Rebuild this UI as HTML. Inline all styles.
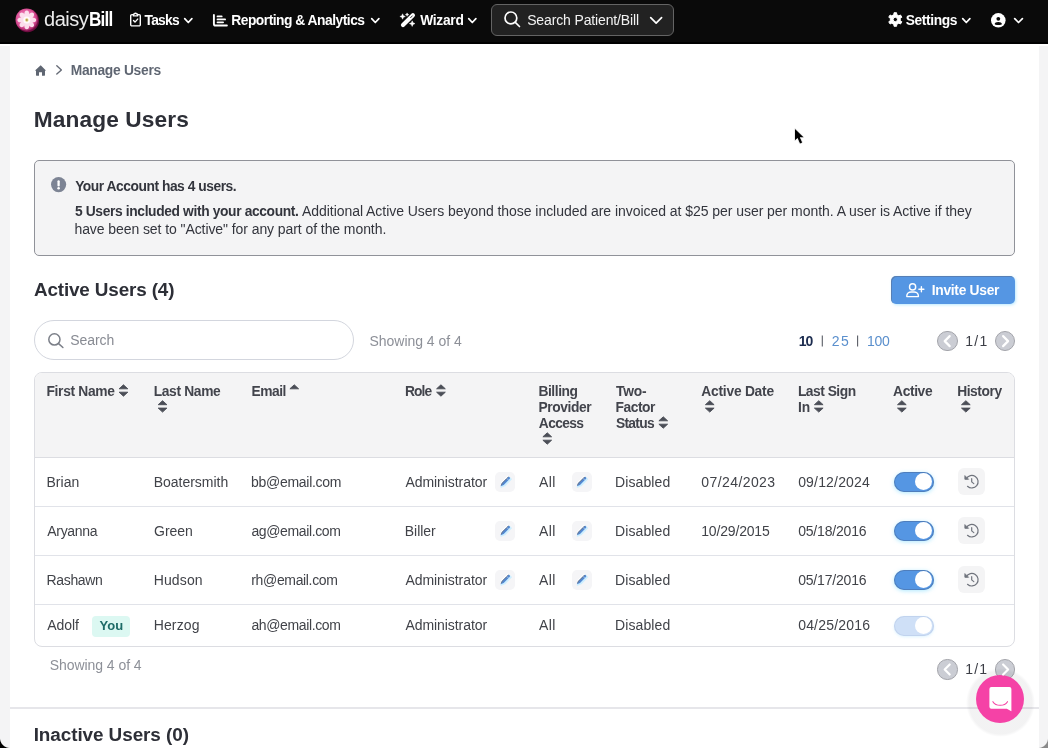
<!DOCTYPE html>
<html lang="en">
<head>
<meta charset="utf-8">
<title>Manage Users</title>
<style>
*{box-sizing:border-box}
html,body{margin:0;padding:0}
body{width:1048px;height:748px;overflow:hidden;background:#f4f4f5;font-family:"Liberation Sans",Arial,sans-serif;color:#3f4149;position:relative;font-size:14px}
.x{position:absolute;white-space:nowrap;line-height:20px;height:20px}
.b{position:absolute}
svg{position:absolute;overflow:visible}
#nav{left:0;top:0;width:1048px;height:44px;background:#0a0a0a;border-bottom:2px solid #000}
#nsearch{left:491px;top:4px;width:183px;height:32px;border:1px solid #646464;border-radius:6px;background:#222}
#gap{left:0;top:44px;width:1048px;height:2px;background:#fff}
#main{left:10px;top:46px;width:1029px;height:702px;background:#fff}
#alert{left:34px;top:160px;width:981px;height:96px;border:1px solid #909299;border-radius:5px;background:#f4f4f5}
#invite{left:890.7px;top:276.2px;width:124.3px;height:27.6px;border-radius:5px;background:#5596e3;box-shadow:inset 1px 1px 0 rgba(90,100,125,.45),1px 1px 3px rgba(160,225,255,.7)}
#search{left:34px;top:320px;width:320px;height:40px;border:1px solid #d3d6de;border-radius:20px;background:#fff}
#tbl{left:34px;top:372px;width:981px;height:275px;border:1px solid #dcdde2;border-radius:8px;background:#fff;overflow:hidden}
#thead{left:0;top:0;width:100%;height:85px;background:#f4f4f5;border-bottom:1px solid #dcdde2}
.rl{left:0;width:100%;height:1px;background:#e1e3e9}
.eb{width:20px;height:20px;border-radius:5px;background:#f5f5f7}
.hb{width:27px;height:27px;border-radius:6px;background:#f4f4f5;left:958px}
.tg{left:893.5px;width:40px;height:20.5px;border-radius:11px;background:#5596e3;box-shadow:inset 0 0 0 1px rgba(70,90,130,.4),0 1px 4px rgba(150,225,255,.75)}
.tg i{position:absolute;right:1.6px;top:1.6px;width:17.3px;height:17.3px;border-radius:50%;background:#fff}
.tg.off{background:#cfe0f7;box-shadow:inset 0 0 0 1px rgba(150,170,210,.25),0 1px 3px rgba(200,235,255,.6)}
.pg{width:20.4px;height:20.4px;border-radius:50%;background:#cbcdd4;border:1px solid #a3a4aa}
#you{left:92px;top:615.8px;width:38px;height:21px;border-radius:4px;background:#dcf8f2}
#hr{left:10px;top:707px;width:1029px;height:1.5px;background:#e6e6ea}
#halo{left:965.5px;top:667.5px;width:69px;height:69px;border-radius:50%;background:radial-gradient(circle closest-side,rgba(10,10,20,.05) 0,rgba(10,10,20,.05) 91%,rgba(10,10,20,0) 100%)}
#chat{left:976.3px;top:675.3px;width:48px;height:48px;border-radius:50%;background:#f542a6}
#cbl{left:0;top:738px;width:10px;height:10px;background:radial-gradient(circle at 100% 0,rgba(0,0,0,0) 9.5px,#000 10.5px)}
#cbr{left:1038px;top:738px;width:10px;height:10px;background:radial-gradient(circle at 0 0,rgba(0,0,0,0) 9.5px,#8a8a8a 10.5px)}
</style>
</head>
<body><div id="wrap" style="position:absolute;left:0;top:0;width:1048px;height:748px;will-change:transform">
<div class="b" id="nav"></div>
<div class="b" id="nsearch"></div>
<div class="b" id="gap"></div>
<div class="b" id="main"></div>
<div class="b" id="alert"></div>
<div class="b" id="invite"></div>
<div class="b" id="search"></div>
<div class="b" id="tbl"><div class="b" id="thead"></div>
<div class="b rl" style="top:133px"></div><div class="b rl" style="top:182px"></div><div class="b rl" style="top:231px"></div></div>
<div class="b eb" style="left:495px;top:472px"></div><div class="b eb" style="left:571.5px;top:472px"></div>
<div class="b eb" style="left:495px;top:521px"></div><div class="b eb" style="left:571.5px;top:521px"></div>
<div class="b eb" style="left:495px;top:570px"></div><div class="b eb" style="left:571.5px;top:570px"></div>
<div class="b hb" style="top:468px"></div><div class="b hb" style="top:517px"></div><div class="b hb" style="top:566px"></div>
<div class="b tg" style="top:471.5px"><i></i></div><div class="b tg" style="top:520.5px"><i></i></div><div class="b tg" style="top:569.5px"><i></i></div><div class="b tg off" style="top:615.5px"><i></i></div>
<div class="b pg" style="left:937.3px;top:331px"></div><div class="b pg" style="left:994.6px;top:331px"></div>
<div class="b pg" style="left:937.3px;top:659.4px"></div><div class="b pg" style="left:994.6px;top:659.4px"></div>
<div class="b" id="you"></div>
<div class="b" id="hr"></div>
<div class="b" id="halo"></div>
<div class="b" id="chat"></div>
<div class="b" id="cbl"></div><div class="b" id="cbr"></div>
<svg style="left:15.3px;top:8.4px" width="24" height="24.6" viewBox="-12 -12 24 24.6">
<defs><radialGradient id="lg" cx="46%" cy="44%" r="56%"><stop offset="0" stop-color="#f59ac8"/><stop offset=".7" stop-color="#e0589c"/><stop offset=".9" stop-color="#b93478"/><stop offset="1" stop-color="#8d1c58"/></radialGradient></defs>
<circle cx=".5" cy=".7" r="11.5" fill="#6d0c3f"/><circle cx="-.3" cy="-.3" r="11.2" fill="url(#lg)"/>
<g fill="#fde3f0" opacity=".97" transform="translate(-.2 -.1)"><ellipse rx="2.5" ry="4.4" cy="-5"/><ellipse rx="2.5" ry="4.4" cy="-5" transform="rotate(45)"/><ellipse rx="2.5" ry="4.4" cy="-5" transform="rotate(90)"/><ellipse rx="2.5" ry="4.4" cy="-5" transform="rotate(135)"/><ellipse rx="2.5" ry="4.4" cy="-5" transform="rotate(180)"/><ellipse rx="2.5" ry="4.4" cy="-5" transform="rotate(225)"/><ellipse rx="2.5" ry="4.4" cy="-5" transform="rotate(270)"/><ellipse rx="2.5" ry="4.4" cy="-5" transform="rotate(315)"/><circle r="3.5" fill="#fff"/></g>
<circle cx="-.2" cy="0" r="1.7" fill="#e6cf7a"/><circle cx="-.2" cy="0" r=".75" fill="#8a7a48"/>
</svg>
<svg style="left:129.8px;top:12.4px" width="11" height="14.6" viewBox="0 0 11 14.6" ><g fill="none" stroke="#fff" stroke-width="1.4" stroke-linejoin="round" stroke-linecap="round"><path d="M3.2 2.6H1.9a1.2 1.2 0 0 0-1.2 1.2v8.9a1.2 1.2 0 0 0 1.2 1.2h7.2a1.2 1.2 0 0 0 1.2-1.2V3.8a1.2 1.2 0 0 0-1.2-1.2H7.8"/><path d="M3.4 3.9V2.7c0-.4.3-.7.7-.7h.3a1.2 1.2 0 0 1 2.2 0h.3c.4 0 .7.3.7.7v1.2z" /><path d="M3.5 8.6l1.5 1.5 2.7-3"/></g></svg>
<svg style="left:213.4px;top:13.6px" width="14.8" height="12.4" viewBox="0 0 14.8 12.4" ><g fill="none" stroke="#fff" stroke-linecap="round" stroke-linejoin="round"><path d="M.9 .9v9a1.6 1.6 0 0 0 1.6 1.6h11.4" stroke-width="1.9"/><path d="M4.5 2.4h4.2M4.5 5.4h7.6M4.500 8.300h5.600" stroke-width="1.8"/></g></svg>
<svg style="left:400.3px;top:12.8px" width="15.2" height="14" viewBox="0 0 15.2 14" ><path d="M3.000 12.100L12.900 2.300" stroke="#fff" stroke-width="4.2" stroke-linecap="round"/><path d="M10.600 4.700l1.700-1.800" stroke="#0a0a0a" stroke-width=".8" stroke-linecap="round"/><path d="M2.60 0.80L3.41 2.69L5.30 3.50L3.41 4.31L2.60 6.20L1.79 4.31L-0.10 3.50L1.79 2.69Z" fill="#fff" stroke="#fff" stroke-width=".5" stroke-linejoin="round"/><path d="M7.10 -0.10L7.61 1.09L8.80 1.60L7.61 2.11L7.10 3.30L6.59 2.11L5.40 1.60L6.59 1.09Z" fill="#fff" stroke="#fff" stroke-width=".5" stroke-linejoin="round"/><path d="M12.20 7.80L13.04 9.76L15.00 10.60L13.04 11.44L12.20 13.40L11.36 11.44L9.40 10.60L11.36 9.76Z" fill="#fff" stroke="#fff" stroke-width=".5" stroke-linejoin="round"/></svg>
<svg style="left:184.4px;top:17.8px" width="8.6" height="5.3" viewBox="0 0 8.6 5.3" ><path d="M.7 .7L4.30 4.50L7.90 .7" fill="none" stroke="#fff" stroke-width="1.7" stroke-linecap="round" stroke-linejoin="round"/></svg>
<svg style="left:370.8px;top:17.8px" width="8.6" height="5.3" viewBox="0 0 8.6 5.3" ><path d="M.7 .7L4.30 4.50L7.90 .7" fill="none" stroke="#fff" stroke-width="1.7" stroke-linecap="round" stroke-linejoin="round"/></svg>
<svg style="left:468.2px;top:17.8px" width="8.6" height="5.3" viewBox="0 0 8.6 5.3" ><path d="M.7 .7L4.30 4.50L7.90 .7" fill="none" stroke="#fff" stroke-width="1.7" stroke-linecap="round" stroke-linejoin="round"/></svg>
<svg style="left:962.1px;top:17.8px" width="8.6" height="5.3" viewBox="0 0 8.6 5.3" ><path d="M.7 .7L4.30 4.50L7.90 .7" fill="none" stroke="#fff" stroke-width="1.7" stroke-linecap="round" stroke-linejoin="round"/></svg>
<svg style="left:1014.2px;top:17.8px" width="9.1" height="5.3" viewBox="0 0 9.1 5.3" ><path d="M.7 .7L4.55 4.50L8.40 .7" fill="none" stroke="#fff" stroke-width="1.7" stroke-linecap="round" stroke-linejoin="round"/></svg>
<svg style="left:649.7px;top:17px" width="12.3" height="6.9" viewBox="0 0 12.3 6.9" ><path d="M.7 .7L6.15 6.10L11.60 .7" fill="none" stroke="#fff" stroke-width="1.7" stroke-linecap="round" stroke-linejoin="round"/></svg>
<svg style="left:503.8px;top:10.9px" width="16.4" height="16.4" viewBox="0 0 16.4 16.4" ><g fill="none" stroke="#fff" stroke-width="1.7" stroke-linecap="round"><circle cx="6.9" cy="6.9" r="5.9"/><path d="M11.300 11.300l4.200 4.200"/></g></svg>
<svg style="left:887.6px;top:12.2px" width="14.6" height="15" viewBox="0 0 14.6 15" ><path d="M5.88 2.60L6.01 0.72L8.59 0.72L8.72 2.60L10.83 3.82L12.52 2.99L13.82 5.23L12.25 6.28L12.25 8.72L13.82 9.77L12.52 12.01L10.83 11.18L8.72 12.40L8.59 14.28L6.01 14.28L5.88 12.40L3.77 11.18L2.08 12.01L0.78 9.77L2.35 8.72L2.35 6.28L0.78 5.23L2.08 2.99L3.77 3.82ZM5.10 7.50a2.2 2.2 0 1 0 4.4 0a2.2 2.2 0 1 0 -4.4 0Z" fill="#fff" fill-rule="evenodd" stroke="#fff" stroke-width="1" stroke-linejoin="round"/></svg>
<svg style="left:991.4px;top:12.5px" width="14.6" height="14.6" viewBox="0 0 14.6 14.6" ><circle cx="7.3" cy="7.3" r="7.3" fill="#fff"/><circle cx="7.3" cy="5.800" r="1.900" fill="#0a0a0a"/><path d="M3.700 11.000c0-1.300 1.600-2.000 3.600-2.000s3.600.7 3.600 2.000c0 .7-1.600 1.100-3.600 1.100s-3.600-.4-3.600-1.100z" fill="#0a0a0a"/></svg>
<svg style="left:34.9px;top:64.7px" width="11.4" height="11" viewBox="0 0 11.4 11" ><path d="M5.700 .2L.3 5.200c-.2.200-.1.600.2.600h.5v4.500c0 .3.200.5.500.5h2.500V7.200h3v3.600h2.500c.3 0 .5-.2.500-.5V5.800h.5c.3 0 .4-.4.200-.6z" fill="#5f6672"/></svg>
<svg style="left:55.8px;top:65.2px" width="6.4" height="9.8" viewBox="0 0 6.400 9.800" ><path d="M.8 .8l4.600 4.100L.8 9" fill="none" stroke="#666b76" stroke-width="1.4" stroke-linecap="round" stroke-linejoin="round"/></svg>
<svg style="left:51.4px;top:177.4px" width="15.2" height="15.2" viewBox="0 0 15.2 15.2" ><circle cx="7.6" cy="7.6" r="7.6" fill="#7d8494"/><path d="M7.600 4.300v4.100" stroke="#fff" stroke-width="2.3" stroke-linecap="round"/><circle cx="7.6" cy="11.200" r="1.3" fill="#fff"/></svg>
<svg style="left:905.8px;top:282.8px" width="18.4" height="14.4" viewBox="0 0 18.4 14.4" ><g fill="none" stroke="#fff" stroke-width="1.4" stroke-linecap="round" stroke-linejoin="round"><circle cx="6.6" cy="3.900" r="3.100"/><path d="M.8 13.600v-.5c0-2.500 2-4.100 4.300-4.100h3c2.300 0 4.300 1.600 4.300 4.100v.5z"/><path d="M15.400 3.800v5M12.900 6.300h5"/></g></svg>
<svg style="left:48.1px;top:333px" width="15.8" height="15.2" viewBox="0 0 15.800 15.200" ><g fill="none" stroke="#7b7f88" stroke-width="1.5" stroke-linecap="round"><circle cx="6.4" cy="6.4" r="5.6"/><path d="M10.600 10.600l4.300 3.900"/></g></svg>
<svg style="left:0px;top:0px" width="1048" height="748" viewBox="0 0 1048 748" ><path d="M123.45 384.80L127.80 388.80H119.10Z" fill="#4b4e57" stroke="#4b4e57" stroke-width=".9" stroke-linejoin="round"/><path d="M123.45 396.20L127.80 392.20H119.10Z" fill="#4b4e57" stroke="#4b4e57" stroke-width=".9" stroke-linejoin="round"/><path d="M162.55 400.70L166.90 404.70H158.20Z" fill="#4b4e57" stroke="#4b4e57" stroke-width=".9" stroke-linejoin="round"/><path d="M162.55 412.10L166.90 408.10H158.20Z" fill="#4b4e57" stroke="#4b4e57" stroke-width=".9" stroke-linejoin="round"/><path d="M440.95 384.80L445.30 388.80H436.60Z" fill="#4b4e57" stroke="#4b4e57" stroke-width=".9" stroke-linejoin="round"/><path d="M440.95 396.20L445.30 392.20H436.60Z" fill="#4b4e57" stroke="#4b4e57" stroke-width=".9" stroke-linejoin="round"/><path d="M547.25 432.80L551.60 436.80H542.90Z" fill="#4b4e57" stroke="#4b4e57" stroke-width=".9" stroke-linejoin="round"/><path d="M547.25 444.20L551.60 440.20H542.90Z" fill="#4b4e57" stroke="#4b4e57" stroke-width=".9" stroke-linejoin="round"/><path d="M663.25 416.80L667.60 420.80H658.90Z" fill="#4b4e57" stroke="#4b4e57" stroke-width=".9" stroke-linejoin="round"/><path d="M663.25 428.20L667.60 424.20H658.90Z" fill="#4b4e57" stroke="#4b4e57" stroke-width=".9" stroke-linejoin="round"/><path d="M709.75 400.70L714.10 404.70H705.40Z" fill="#4b4e57" stroke="#4b4e57" stroke-width=".9" stroke-linejoin="round"/><path d="M709.75 412.10L714.10 408.10H705.40Z" fill="#4b4e57" stroke="#4b4e57" stroke-width=".9" stroke-linejoin="round"/><path d="M818.75 400.70L823.10 404.70H814.40Z" fill="#4b4e57" stroke="#4b4e57" stroke-width=".9" stroke-linejoin="round"/><path d="M818.75 412.10L823.10 408.10H814.40Z" fill="#4b4e57" stroke="#4b4e57" stroke-width=".9" stroke-linejoin="round"/><path d="M901.85 400.70L906.20 404.70H897.50Z" fill="#4b4e57" stroke="#4b4e57" stroke-width=".9" stroke-linejoin="round"/><path d="M901.85 412.10L906.20 408.10H897.50Z" fill="#4b4e57" stroke="#4b4e57" stroke-width=".9" stroke-linejoin="round"/><path d="M965.85 400.70L970.20 404.70H961.50Z" fill="#4b4e57" stroke="#4b4e57" stroke-width=".9" stroke-linejoin="round"/><path d="M965.85 412.10L970.20 408.10H961.50Z" fill="#4b4e57" stroke="#4b4e57" stroke-width=".9" stroke-linejoin="round"/><path d="M294.25 384.80L298.60 388.80H289.90Z" fill="#4b4e57" stroke="#4b4e57" stroke-width=".9" stroke-linejoin="round"/></svg>
<svg style="left:0px;top:0px" width="1048" height="748" viewBox="0 0 1048 748" ><g transform="translate(505.0 481.8) rotate(45)"><path d="M-.3 -6.300h2.900v9.300L1.000 6.600l-1.300-3.600z" fill="#cdeeff" stroke="#cdeeff" stroke-width="1.200" stroke-linejoin="round"/><path d="M-1.900 -6.000v9.000" stroke="#fff" stroke-width="1.200" stroke-linecap="round"/><path d="M-1.300 -5.200a1.300 1.300 0 0 1 2.600 0v8.300L0 6.300l-1.300-3.200z" fill="#5288d2"/><path d="M-1.000 -5.300v8.300l.6 1.700" stroke="#6f7480" stroke-width=".8" fill="none" stroke-linecap="round"/><path d="M-1.300 -3.700h2.600" stroke="#e8f4ff" stroke-width=".5"/></g><g transform="translate(581.3 481.8) rotate(45)"><path d="M-.3 -6.300h2.900v9.300L1.000 6.600l-1.300-3.600z" fill="#cdeeff" stroke="#cdeeff" stroke-width="1.200" stroke-linejoin="round"/><path d="M-1.900 -6.000v9.000" stroke="#fff" stroke-width="1.200" stroke-linecap="round"/><path d="M-1.300 -5.200a1.300 1.300 0 0 1 2.600 0v8.300L0 6.300l-1.300-3.200z" fill="#5288d2"/><path d="M-1.000 -5.300v8.300l.6 1.700" stroke="#6f7480" stroke-width=".8" fill="none" stroke-linecap="round"/><path d="M-1.300 -3.700h2.600" stroke="#e8f4ff" stroke-width=".5"/></g><g transform="translate(505.0 530.8) rotate(45)"><path d="M-.3 -6.300h2.900v9.300L1.000 6.600l-1.300-3.600z" fill="#cdeeff" stroke="#cdeeff" stroke-width="1.200" stroke-linejoin="round"/><path d="M-1.900 -6.000v9.000" stroke="#fff" stroke-width="1.200" stroke-linecap="round"/><path d="M-1.300 -5.200a1.300 1.300 0 0 1 2.600 0v8.300L0 6.300l-1.300-3.200z" fill="#5288d2"/><path d="M-1.000 -5.300v8.300l.6 1.700" stroke="#6f7480" stroke-width=".8" fill="none" stroke-linecap="round"/><path d="M-1.300 -3.700h2.600" stroke="#e8f4ff" stroke-width=".5"/></g><g transform="translate(581.3 530.8) rotate(45)"><path d="M-.3 -6.300h2.900v9.300L1.000 6.600l-1.300-3.600z" fill="#cdeeff" stroke="#cdeeff" stroke-width="1.200" stroke-linejoin="round"/><path d="M-1.900 -6.000v9.000" stroke="#fff" stroke-width="1.200" stroke-linecap="round"/><path d="M-1.300 -5.200a1.300 1.300 0 0 1 2.600 0v8.300L0 6.300l-1.300-3.200z" fill="#5288d2"/><path d="M-1.000 -5.300v8.300l.6 1.700" stroke="#6f7480" stroke-width=".8" fill="none" stroke-linecap="round"/><path d="M-1.300 -3.700h2.600" stroke="#e8f4ff" stroke-width=".5"/></g><g transform="translate(505.0 579.8) rotate(45)"><path d="M-.3 -6.300h2.900v9.300L1.000 6.600l-1.300-3.600z" fill="#cdeeff" stroke="#cdeeff" stroke-width="1.200" stroke-linejoin="round"/><path d="M-1.900 -6.000v9.000" stroke="#fff" stroke-width="1.200" stroke-linecap="round"/><path d="M-1.300 -5.200a1.300 1.300 0 0 1 2.600 0v8.300L0 6.300l-1.300-3.200z" fill="#5288d2"/><path d="M-1.000 -5.300v8.300l.6 1.700" stroke="#6f7480" stroke-width=".8" fill="none" stroke-linecap="round"/><path d="M-1.300 -3.700h2.600" stroke="#e8f4ff" stroke-width=".5"/></g><g transform="translate(581.3 579.8) rotate(45)"><path d="M-.3 -6.300h2.900v9.300L1.000 6.600l-1.300-3.600z" fill="#cdeeff" stroke="#cdeeff" stroke-width="1.200" stroke-linejoin="round"/><path d="M-1.900 -6.000v9.000" stroke="#fff" stroke-width="1.200" stroke-linecap="round"/><path d="M-1.300 -5.200a1.300 1.300 0 0 1 2.600 0v8.300L0 6.300l-1.300-3.200z" fill="#5288d2"/><path d="M-1.000 -5.300v8.300l.6 1.700" stroke="#6f7480" stroke-width=".8" fill="none" stroke-linecap="round"/><path d="M-1.300 -3.700h2.600" stroke="#e8f4ff" stroke-width=".5"/></g></svg>
<svg style="left:0px;top:0px" width="1048" height="748" viewBox="0 0 1048 748" ><g transform="translate(971.8 481.7)" fill="none" stroke="#70747d" stroke-width="1.200" stroke-linecap="round" stroke-linejoin="round"><path d="M-5.500 -3.100A6.300 6.300 0 1 1 -4.300 4.600"/><path d="M-6.900 -5.700v3.300h3.300z" fill="#70747d" stroke-width=".9"/><path d="M-.1 -3.000v3.200l2.100 1.700"/></g><g transform="translate(971.8 530.7)" fill="none" stroke="#70747d" stroke-width="1.200" stroke-linecap="round" stroke-linejoin="round"><path d="M-5.500 -3.100A6.300 6.300 0 1 1 -4.300 4.600"/><path d="M-6.900 -5.700v3.300h3.300z" fill="#70747d" stroke-width=".9"/><path d="M-.1 -3.000v3.200l2.100 1.700"/></g><g transform="translate(971.8 579.7)" fill="none" stroke="#70747d" stroke-width="1.200" stroke-linecap="round" stroke-linejoin="round"><path d="M-5.500 -3.100A6.300 6.300 0 1 1 -4.300 4.600"/><path d="M-6.900 -5.700v3.300h3.300z" fill="#70747d" stroke-width=".9"/><path d="M-.1 -3.000v3.200l2.100 1.700"/></g></svg>
<svg style="left:0px;top:0px" width="1048" height="748" viewBox="0 0 1048 748" ><g fill="none" stroke="#fff" stroke-width="2.2" stroke-linecap="round" stroke-linejoin="round"><path d="M949.7 336.1L944.7 341.1L949.7 346.1" /><path d="M1003.1 336.1L1008.1 341.1L1003.1 346.1"/><path d="M949.7 664.5L944.7 669.5L949.7 674.5" /><path d="M1003.1 664.5L1008.1 669.5L1003.1 674.5"/></g></svg>
<svg style="left:0px;top:0px" width="1048" height="748" viewBox="0 0 1048 748" ><path d="M822.3 335.500v11M857.600 335.500v11" stroke="#5a5d66" stroke-width="1.1"/></svg>
<svg style="left:0px;top:0px" width="1048" height="748" viewBox="0 0 1048 748" ><path d="M991.400 687h18a2 2 0 0 1 2 2v22.300l-4.600-2.500h-15.400a2 2 0 0 1-2-2v-17.800a2 2 0 0 1 2-2z" fill="#fff"/><path d="M992.900 701.700c3 4.800 11.600 4.800 14.600 0" fill="none" stroke="#f542a6" stroke-width="1.100" stroke-linecap="round"/></svg>
<svg style="left:795.2px;top:129.2px" width="9.6" height="15" viewBox="0 0 9 14" ><path d="M0 0L0 10.600L2.400 8.400L4.700 13.500L6.700 12.600L4.500 7.700L8 7.600Z" fill="#000" stroke="#fff" stroke-width="1.100" stroke-linejoin="round" paint-order="stroke" style="filter:drop-shadow(0 .5px .6px rgba(0,0,0,.3))"/></svg>
<span class="x" style="left:44.06px;top:9.00px;font-size:20px;letter-spacing:-0.503px;color:#ececec">daisy</span>
<span class="x" style="left:89.25px;top:9.00px;font-size:20px;letter-spacing:-0.965px;color:#fff;font-weight:bold;transform-origin:0 0;transform:scaleX(0.86)">Bill</span>
<span class="x" style="left:144.55px;top:11.00px;font-size:13.8px;letter-spacing:-0.769px;color:#fff;font-weight:bold">Tasks</span>
<span class="x" style="left:231.28px;top:11.00px;font-size:13.8px;letter-spacing:-0.492px;color:#fff;font-weight:bold">Reporting &amp; Analytics</span>
<span class="x" style="left:420.19px;top:11.00px;font-size:13.8px;letter-spacing:-0.296px;color:#fff;font-weight:bold">Wizard</span>
<span class="x" style="left:905.80px;top:11.00px;font-size:13.8px;letter-spacing:-0.409px;color:#fff;font-weight:bold">Settings</span>
<span class="x" style="left:527.16px;top:10.00px;font-size:14px;letter-spacing:-0.134px;color:#f2f2f2">Search Patient/Bill</span>
<span class="x" style="left:70.68px;top:61.00px;font-size:13.8px;letter-spacing:-0.279px;color:#5f6672;font-weight:bold">Manage Users</span>
<span class="x" style="left:33.68px;top:109.00px;font-size:22.7px;letter-spacing:0.128px;color:#2d2f37;font-weight:bold">Manage Users</span>
<span class="x" style="left:75.16px;top:177.00px;font-size:13.8px;letter-spacing:-0.460px;color:#33353d;font-weight:bold">Your Account has 4 users.</span>
<span class="x" style="left:74.98px;top:202.00px;font-size:13.8px;letter-spacing:-0.360px;color:#33353d;font-weight:bold">5 Users included with your account.</span>
<span class="x" style="left:301.97px;top:201.00px;font-size:14px;letter-spacing:-0.045px;color:#33353d">Additional Active Users beyond those included are invoiced at $25 per user per month. A user is Active if they</span>
<span class="x" style="left:74.43px;top:219.00px;font-size:14px;letter-spacing:-0.077px;color:#33353d">have been set to "Active" for any part of the month.</span>
<span class="x" style="left:33.93px;top:280.00px;font-size:18.9px;letter-spacing:-0.152px;color:#2d2f37;font-weight:bold">Active Users (4)</span>
<span class="x" style="left:931.78px;top:281.00px;font-size:13.8px;letter-spacing:-0.292px;color:#fff;font-weight:bold">Invite User</span>
<span class="x" style="left:70.36px;top:330.00px;font-size:14px;letter-spacing:-0.083px;color:#888b93">Search</span>
<span class="x" style="left:369.56px;top:331.00px;font-size:14px;letter-spacing:-0.036px;color:#8d9098">Showing 4 of 4</span>
<span class="x" style="left:798.72px;top:331.00px;font-size:14px;letter-spacing:-1.000px;color:#1d2d50;font-weight:bold">10</span>
<span class="x" style="left:831.70px;top:331.00px;font-size:14px;letter-spacing:1.620px;color:#5a8fcd">25</span>
<span class="x" style="left:866.93px;top:331.00px;font-size:14px;letter-spacing:-0.273px;color:#5a8fcd">100</span>
<span class="x" style="left:965.33px;top:331.00px;font-size:14px;letter-spacing:-0.123px;color:#3c3e46;word-spacing:-2.4px">1 / 1</span>
<span class="x" style="left:965.33px;top:659.00px;font-size:14px;letter-spacing:-0.173px;color:#3c3e46;word-spacing:-2.4px">1 / 1</span>
<span class="x" style="left:46.48px;top:382.00px;font-size:13.8px;letter-spacing:-0.324px;color:#42444c;font-weight:bold">First Name</span>
<span class="x" style="left:153.68px;top:382.00px;font-size:13.8px;letter-spacing:-0.336px;color:#42444c;font-weight:bold">Last Name</span>
<span class="x" style="left:251.48px;top:382.00px;font-size:13.8px;letter-spacing:-0.477px;color:#42444c;font-weight:bold">Email</span>
<span class="x" style="left:404.88px;top:382.00px;font-size:13.8px;letter-spacing:-0.834px;color:#42444c;font-weight:bold">Role</span>
<span class="x" style="left:538.48px;top:382.00px;font-size:13.8px;letter-spacing:-0.451px;color:#42444c;font-weight:bold">Billing</span>
<span class="x" style="left:538.48px;top:398.00px;font-size:13.8px;letter-spacing:-0.392px;color:#42444c;font-weight:bold">Provider</span>
<span class="x" style="left:538.86px;top:414.00px;font-size:13.8px;letter-spacing:-0.664px;color:#42444c;font-weight:bold">Access</span>
<span class="x" style="left:615.95px;top:382.00px;font-size:13.8px;letter-spacing:-0.183px;color:#42444c;font-weight:bold">Two-</span>
<span class="x" style="left:615.58px;top:398.00px;font-size:13.8px;letter-spacing:-0.467px;color:#42444c;font-weight:bold">Factor</span>
<span class="x" style="left:615.90px;top:414.00px;font-size:13.8px;letter-spacing:-0.700px;color:#42444c;font-weight:bold">Status</span>
<span class="x" style="left:701.36px;top:382.00px;font-size:13.8px;letter-spacing:-0.243px;color:#42444c;font-weight:bold">Active Date</span>
<span class="x" style="left:797.88px;top:382.00px;font-size:13.8px;letter-spacing:-0.489px;color:#42444c;font-weight:bold">Last Sign</span>
<span class="x" style="left:797.88px;top:398.00px;font-size:13.8px;letter-spacing:0.018px;color:#42444c;font-weight:bold">In</span>
<span class="x" style="left:893.06px;top:382.00px;font-size:13.8px;letter-spacing:-0.379px;color:#42444c;font-weight:bold">Active</span>
<span class="x" style="left:957.18px;top:382.00px;font-size:13.8px;letter-spacing:-0.440px;color:#42444c;font-weight:bold">History</span>
<span class="x" style="left:46.45px;top:472.00px;font-size:14px;letter-spacing:0.044px;color:#414349">Brian</span>
<span class="x" style="left:153.65px;top:472.00px;font-size:14px;letter-spacing:-0.014px;color:#414349">Boatersmith</span>
<span class="x" style="left:251.10px;top:472.00px;font-size:14px;letter-spacing:-0.296px;color:#414349">bb@email.com</span>
<span class="x" style="left:405.47px;top:472.00px;font-size:14px;letter-spacing:-0.067px;color:#414349">Administrator</span>
<span class="x" style="left:538.97px;top:472.00px;font-size:14px;letter-spacing:0.403px;color:#414349">All</span>
<span class="x" style="left:615.05px;top:472.00px;font-size:14px;letter-spacing:0.096px;color:#414349">Disabled</span>
<span class="x" style="left:701.35px;top:472.00px;font-size:14px;letter-spacing:0.410px;color:#414349">07/24/2023</span>
<span class="x" style="left:798.15px;top:472.00px;font-size:14px;letter-spacing:0.177px;color:#414349">09/12/2024</span>
<span class="x" style="left:47.37px;top:521.00px;font-size:14px;letter-spacing:-0.336px;color:#414349">Aryanna</span>
<span class="x" style="left:154.10px;top:521.00px;font-size:14px;letter-spacing:-0.074px;color:#414349">Green</span>
<span class="x" style="left:251.41px;top:521.00px;font-size:14px;letter-spacing:-0.369px;color:#414349">ag@email.com</span>
<span class="x" style="left:404.75px;top:521.00px;font-size:14px;letter-spacing:-0.027px;color:#414349">Biller</span>
<span class="x" style="left:538.97px;top:521.00px;font-size:14px;letter-spacing:0.403px;color:#414349">All</span>
<span class="x" style="left:615.05px;top:521.00px;font-size:14px;letter-spacing:0.096px;color:#414349">Disabled</span>
<span class="x" style="left:701.23px;top:521.00px;font-size:14px;letter-spacing:-0.168px;color:#414349">10/29/2015</span>
<span class="x" style="left:798.15px;top:521.00px;font-size:14px;letter-spacing:-0.178px;color:#414349">05/18/2016</span>
<span class="x" style="left:46.45px;top:570.00px;font-size:14px;letter-spacing:-0.318px;color:#414349">Rashawn</span>
<span class="x" style="left:153.65px;top:570.00px;font-size:14px;letter-spacing:0.141px;color:#414349">Hudson</span>
<span class="x" style="left:251.27px;top:570.00px;font-size:14px;letter-spacing:-0.346px;color:#414349">rh@email.com</span>
<span class="x" style="left:405.47px;top:570.00px;font-size:14px;letter-spacing:-0.067px;color:#414349">Administrator</span>
<span class="x" style="left:538.97px;top:570.00px;font-size:14px;letter-spacing:0.403px;color:#414349">All</span>
<span class="x" style="left:615.05px;top:570.00px;font-size:14px;letter-spacing:0.096px;color:#414349">Disabled</span>
<span class="x" style="left:798.15px;top:570.00px;font-size:14px;letter-spacing:-0.178px;color:#414349">05/17/2016</span>
<span class="x" style="left:47.37px;top:615.00px;font-size:14px;letter-spacing:-0.101px;color:#414349">Adolf</span>
<span class="x" style="left:153.65px;top:615.00px;font-size:14px;letter-spacing:0.164px;color:#414349">Herzog</span>
<span class="x" style="left:251.41px;top:615.00px;font-size:14px;letter-spacing:-0.369px;color:#414349">ah@email.com</span>
<span class="x" style="left:405.47px;top:615.00px;font-size:14px;letter-spacing:-0.067px;color:#414349">Administrator</span>
<span class="x" style="left:538.97px;top:615.00px;font-size:14px;letter-spacing:0.403px;color:#414349">All</span>
<span class="x" style="left:615.05px;top:615.00px;font-size:14px;letter-spacing:0.096px;color:#414349">Disabled</span>
<span class="x" style="left:798.15px;top:615.00px;font-size:14px;letter-spacing:0.199px;color:#414349">04/25/2016</span>
<span class="x" style="left:99.48px;top:616.00px;font-size:13px;letter-spacing:0.046px;color:#1d6b67;font-weight:bold">You</span>
<span class="x" style="left:49.66px;top:655.00px;font-size:14px;letter-spacing:-0.052px;color:#8d9098">Showing 4 of 4</span>
<span class="x" style="left:33.64px;top:725.00px;font-size:18.9px;letter-spacing:-0.067px;color:#2d2f37;font-weight:bold">Inactive Users (0)</span>
</div></body>
</html>
